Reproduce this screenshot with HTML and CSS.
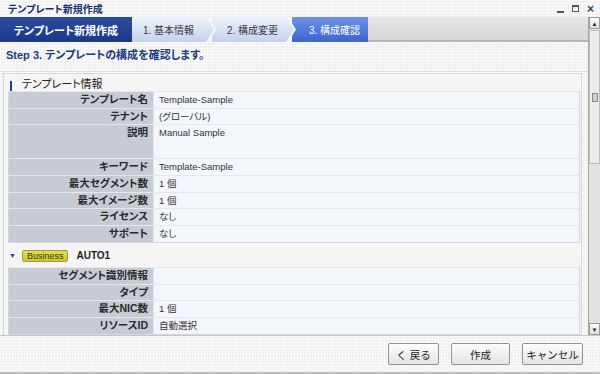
FILE: index.html
```html
<!DOCTYPE html>
<html lang="ja">
<head>
  <meta charset="UTF-8" />
  <title>テンプレート新規作成</title>
  <link rel="stylesheet" href="styles.css">
</head>
<body>
  <div class="titlebar">
    <span class="title">テンプレート新規作成</span>
    <div class="win-ctrl">
      <span class="ctrl-min"></span>
      <span class="ctrl-max"></span>
      <span class="ctrl-close">×</span>
    </div>
  </div>

  <div class="main">
    <div class="content">
      <!-- wizard steps -->
      <div class="tabs">
        <div class="tab-head">テンプレート新規作成</div>
        <div class="tab-step first"><span>1. 基本情報</span></div>
        <div class="tab-step second"><span>2. 構成変更</span></div>
        <div class="tab-active">3. 構成確認</div>
        <div class="tab-rest"></div>
      </div>

      <div class="step">Step 3. テンプレートの構成を確認します。</div>

      <div class="panel">
        <h3 class="section-title">テンプレート情報</h3>
        <div class="info">
          <div class="row"><div class="label">テンプレート名</div><div class="value">Template-Sample</div></div>
          <div class="row"><div class="label">テナント</div><div class="value">(グローバル)</div></div>
          <div class="row tall"><div class="label">説明</div><div class="value">Manual Sample</div></div>
          <div class="row"><div class="label">キーワード</div><div class="value">Template-Sample</div></div>
          <div class="row"><div class="label">最大セグメント数</div><div class="value">1 個</div></div>
          <div class="row"><div class="label">最大イメージ数</div><div class="value">1 個</div></div>
          <div class="row"><div class="label">ライセンス</div><div class="value">なし</div></div>
          <div class="row"><div class="label">サポート</div><div class="value">なし</div></div>
        </div>

        <div class="segment-head">
          <span class="toggle">▼</span>
          <span class="badge">Business</span>
          <span class="seg-name">AUTO1</span>
        </div>
        <div class="info">
          <div class="row"><div class="label">セグメント識別情報</div><div class="value"></div></div>
          <div class="row"><div class="label">タイプ</div><div class="value"></div></div>
          <div class="row"><div class="label">最大NIC数</div><div class="value">1 個</div></div>
          <div class="row"><div class="label">リソースID</div><div class="value">自動選択</div></div>
        </div>
      </div>
    </div>

    <div class="scrollbar">
      <div class="sb-btn">▲</div>
      <div class="sb-track">
        <div class="sb-thumb"><span></span></div>
      </div>
      <div class="sb-btn">▼</div>
    </div>
  </div>

  <div class="footer">
    <button class="btn btn-back">く 戻る</button>
    <button class="btn btn-create">作成</button>
    <button class="btn btn-cancel">キャンセル</button>
  </div>
</body>
</html>
```

FILE: styles.css
```css
body {
  margin: 0;
  width: 600px;
  height: 374px;
  overflow: hidden;
  font-family: "Liberation Sans", "Noto Sans CJK JP", sans-serif;
  font-feature-settings: "palt";
  font-size: 10px;
  color: #333;
  background-color: #efefef;
  background-image:
    linear-gradient(90deg, rgba(255,255,255,0.55) 1px, transparent 1px),
    linear-gradient(rgba(255,255,255,0.55) 1px, transparent 1px);
  background-size: 3px 3px;
}

/* window title */
.titlebar {
  height: 17px;
  display: flex;
  align-items: center;
  justify-content: space-between;
  padding: 0 6px 0 8px;
}

.title {
  font-size: 10px;
  font-weight: bold;
  color: #15306e;
}

.win-ctrl {
  display: flex;
  align-items: center;
  gap: 8px;
  color: #444;
}

.ctrl-min {
  width: 7px;
  height: 2px;
  margin-top: 6px;
  background: #555;
}

.ctrl-max {
  width: 5px;
  height: 4px;
  border: 1px solid #555;
  border-top-width: 2px;
}

.ctrl-close {
  font-size: 12px;
  line-height: 10px;
  font-weight: bold;
}

/* main scroll area */
.main {
  display: flex;
  height: 318px;
}

.content {
  width: 588px;
  overflow: hidden;
}

/* wizard tabs */
.tabs {
  display: flex;
  height: 25px;
}

.tab-head {
  width: 132px;
  display: flex;
  align-items: center;
  justify-content: center;
  color: #fff;
  font-size: 11px;
  font-weight: bold;
  background: linear-gradient(#2c4c9c, #1a3a88);
}

.tab-step {
  position: relative;
  width: 84px;
  margin-right: -4px;
  background: #f4f7fc;
  clip-path: polygon(0 0, 76px 0, 84px 50%, 76px 100%, 0 100%);
}

.tab-step.first { z-index: 3; }
.tab-step.second { z-index: 2; }

.tab-step span {
  display: flex;
  align-items: center;
  height: 100%;
  width: 82px;
  padding-left: 11px;
  box-sizing: border-box;
  color: #3a3a3a;
  background: linear-gradient(#eef3fb, #c2d1ec);
  clip-path: polygon(0 0, 74px 0, 82px 50%, 74px 100%, 0 100%);
}

.tab-step.second span {
  padding-left: 15px;
}

.tab-active {
  width: 76px;
  padding-left: 17px;
  box-sizing: border-box;
  display: flex;
  align-items: center;
  color: #fff;
  background: linear-gradient(#6b93e4, #3b65cf);
}

.tab-rest {
  flex: 1;
  background: linear-gradient(#e6e6e6, #d6d6d6);
  border-bottom: 2px solid #b8b8b8;
  box-sizing: border-box;
}

/* step text */
.step {
  height: 30px;
  line-height: 27px;
  padding-left: 6px;
  font-size: 11px;
  font-weight: bold;
  color: #173a80;
  border-bottom: 1px solid #dcdcdc;
  box-sizing: border-box;
}

/* panel */
.panel {
  margin: 1px 6px 0 3px;
  padding: 0 1px 6px 4px;
  border: 1px solid #d6d6d6;
  background: #f5f5f5;
}

.section-title {
  margin: 0;
  height: 17px;
  padding-left: 14px;
  position: relative;
  font-size: 11px;
  font-weight: normal;
  line-height: 21px;
  color: #222;
}

.section-title::before {
  content: "";
  position: absolute;
  left: 2px;
  top: 7px;
  width: 2px;
  height: 10px;
  background: #1d3f90;
}

.info {
  border: 1px solid #d4d8de;
  border-top: none;
}

.row {
  display: grid;
  grid-template-columns: 144px 1fr;
  height: 16.7px;
  border-top: 1px solid #e4e7ec;
  box-sizing: border-box;
}

.row.tall {
  height: 34px;
}

.label {
  background: #c7ccd4;
  text-align: right;
  padding-right: 5px;
  font-size: 10.5px;
  font-weight: bold;
  color: #2a2a2a;
  line-height: 15px;
}

.value {
  background: #f3f6fb;
  padding-left: 5px;
  font-size: 9.5px;
  line-height: 15px;
  border-left: 1px solid #e4e7ec;
}

/* segment */
.segment-head {
  display: flex;
  align-items: center;
  height: 22px;
  margin-top: 2px;
}

.toggle {
  font-size: 7px;
  color: #1d3f90;
  margin: 0 6px 0 1px;
}

.badge {
  background: linear-gradient(#e4dc58, #cfc534);
  border: 1px solid #a99f22;
  border-radius: 2px;
  padding: 0 4px;
  font-size: 9px;
  line-height: 10px;
  color: #3a3a1a;
}

.seg-name {
  margin-left: 8px;
  font-weight: bold;
  color: #222;
}

/* scrollbar */
.scrollbar {
  width: 12px;
  display: flex;
  flex-direction: column;
  border-left: 1px solid #a8a8a8;
  box-sizing: border-box;
  background: #e2e2e2;
}

.sb-btn {
  height: 12px;
  font-size: 6px;
  line-height: 12px;
  text-align: center;
  color: #222;
  background: linear-gradient(#fdfdfd, #dedede);
  border: 1px solid #9c9c9c;
  box-sizing: border-box;
}

.sb-track {
  flex: 1;
  padding-top: 1px;
}

.sb-thumb {
  height: 132px;
  display: flex;
  align-items: center;
  justify-content: center;
  background: #ececec;
  border: 1px solid #bdbdbd;
}

.sb-thumb span {
  width: 4px;
  height: 7px;
  border: 1px solid #8a8a8a;
  background: #cfcfcf;
}

/* footer */
.footer {
  height: 39px;
  display: flex;
  justify-content: flex-end;
  align-items: center;
  gap: 12px;
  padding-right: 17px;
  border-top: 1px solid #c6c6c6;
  border-bottom: 2px solid #bdbdbd;
  box-sizing: border-box;
}

.btn {
  height: 22px;
  padding: 0;
  font-family: inherit;
  font-size: 10.5px;
  color: #222;
  background: linear-gradient(#fdfdfd, #e4e4e4);
  border: 1px solid #8e949c;
  border-radius: 2px;
}

.btn-back { width: 51px; }
.btn-create { width: 59px; }
.btn-cancel { width: 61px; }
```
